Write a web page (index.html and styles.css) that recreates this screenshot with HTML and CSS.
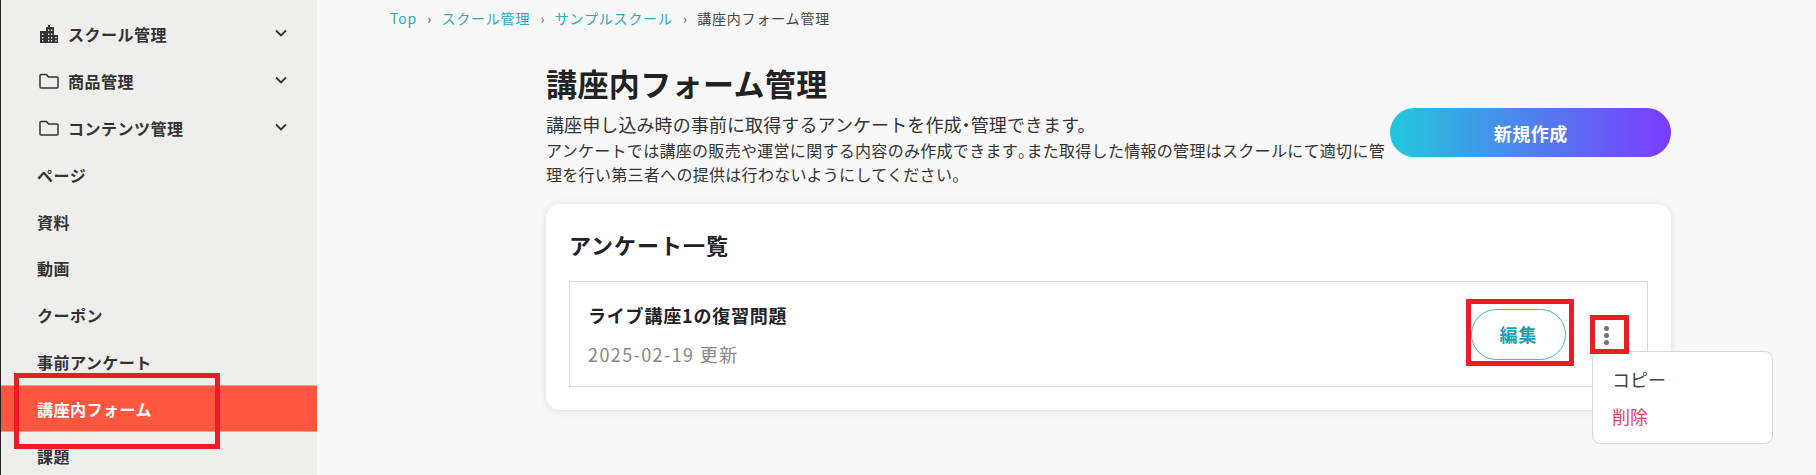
FILE: index.html
```html
<!DOCTYPE html>
<html lang="ja">
<head>
    <meta charset="UTF-8">
    <meta name="viewport" content="width=device-width, initial-scale=1.0">
    <title>講座内フォーム管理</title>
    <link rel="stylesheet" href="styles.css">
</head>
<body>
    <div class="page">
        <nav class="sidebar">
            <div class="nav-item nav-group">
                <svg class="nav-icon" viewBox="0 0 20 20"><path d="M1 7h6V3h2V1h2v2h4v8h4v8H1z" fill="#333"/><path d="M9 5.500h1.300v1.600H9zM12 5.500h1.300v1.600H12zM9 9.500h1.300v1.600H9zM12 9.500h1.300v1.600H12zM3 9.500h1.300v1.600H3zM9 13h1.300v1.600H9zM12 13h1.300v1.600H12zM3 13h1.300v1.600H3zM16.300 13h1.300v1.600h-1.300zM9 16h1.300v1.600H9zM12 16h1.300v1.600H12zM3 16h1.300v1.600H3zM16.300 16h1.300v1.600h-1.300z" fill="#eeeeed"/></svg>
                <span>スクール管理</span>
                <svg class="chevron" viewBox="0 0 12 8"><path d="M1 1.500l5 5 5-5" fill="none" stroke="#333" stroke-width="1.800"/></svg>
            </div>
            <div class="nav-item nav-group">
                <svg class="nav-icon" viewBox="0 0 20 20"><path d="M1 4.500a1 1 0 0 1 1-1h5.500l2 2.500H18a1 1 0 0 1 1 1v9a1 1 0 0 1-1 1H2a1 1 0 0 1-1-1z" fill="none" stroke="#333" stroke-width="1.500"/></svg>
                <span>商品管理</span>
                <svg class="chevron" viewBox="0 0 12 8"><path d="M1 1.500l5 5 5-5" fill="none" stroke="#333" stroke-width="1.800"/></svg>
            </div>
            <div class="nav-item nav-group">
                <svg class="nav-icon" viewBox="0 0 20 20"><path d="M1 4.500a1 1 0 0 1 1-1h5.500l2 2.500H18a1 1 0 0 1 1 1v9a1 1 0 0 1-1 1H2a1 1 0 0 1-1-1z" fill="none" stroke="#333" stroke-width="1.500"/></svg>
                <span>コンテンツ管理</span>
                <svg class="chevron" viewBox="0 0 12 8"><path d="M1 1.500l5 5 5-5" fill="none" stroke="#333" stroke-width="1.800"/></svg>
            </div>
            <div class="nav-item">ページ</div>
            <div class="nav-item">資料</div>
            <div class="nav-item">動画</div>
            <div class="nav-item">クーポン</div>
            <div class="nav-item">事前アンケート</div>
            <div class="nav-item active">講座内フォーム</div>
            <div class="nav-item">課題</div>
        </nav>

        <main class="main">
            <div class="breadcrumb">
                <a>Top</a><span class="sep">›</span><a>スクール管理</a><span class="sep">›</span><a>サンプルスクール</a><span class="sep">›</span><span>講座内フォーム管理</span>
            </div>

            <div class="content">
                <h1>講座内フォーム管理</h1>
                <div class="head-row">
                    <div class="lead">
                        <p class="lead-main">講座申し込み時の事前に取得するアンケートを作成<span class="half">・</span>管理できます。</p>
                        <p class="lead-sub">アンケートでは講座の販売や運営に関する内容のみ作成できます<span class="half">。</span>また取得した情報の管理はスクールにて適切に管理を行い第三者への提供は行わないようにしてください。</p>
                    </div>
                    <button class="new-btn">新規作成</button>
                </div>

                <section class="card">
                    <h2>アンケート一覧</h2>
                    <div class="form-row">
                        <div class="form-info">
                            <div class="form-title">ライブ講座1の復習問題</div>
                            <div class="form-date">2025-02-19 更新</div>
                        </div>
                        <button class="edit-btn">編集</button>
                        <div class="more">
                            <i></i><i></i><i></i>
                        </div>
                        <div class="menu">
                            <div class="menu-item">コピー</div>
                            <div class="menu-item danger">削除</div>
                        </div>
                    </div>
                </section>
            </div>
        </main>
    </div>

    <div class="mark mark-nav"></div>
    <div class="mark mark-edit"></div>
    <div class="mark mark-more"></div>
</body>
</html>
```

FILE: styles.css
```css
* { box-sizing: border-box; }
html, body { height: 100%; }
body { margin: 0; background: #f8f8f8; color: #222; font-family: "Noto Sans CJK JP", "Noto Sans", sans-serif; overflow: hidden; position: relative; }
p, h1, h2 { margin: 0; }
.page { display: flex; height: 475px; }

.sidebar { width: 317px; flex-shrink: 0; background: #eeeeed; border-left: 1px solid #222; padding-top: 11px; overflow: hidden; }
.nav-item { height: 46.8px; display: flex; align-items: center; padding-left: 36px; font-size: 16px; font-weight: 700; letter-spacing: 0.5px; color: #333; }
.nav-group { padding-left: 38px; padding-right: 30px; }
.nav-group span { flex: 1; }
.nav-icon { width: 20px; height: 20px; margin-right: 9px; }
.chevron { width: 12px; height: 8px; margin-top: -2px; }
.nav-item.active { background: #ff5640; color: #fff; border-top: 1px solid #ff9a8c; border-bottom: 1px solid #ff9a8c; }

.main { flex: 1; padding-left: 73px; }
.breadcrumb { height: 36px; display: flex; align-items: center; font-size: 14px; letter-spacing: 0.8px; color: #444; }
.breadcrumb a { color: #27a9c0; }
.sep { width: 24.5px; text-align: center; letter-spacing: 0; color: #555; font-size: 13px; }

.content { width: 1125px; margin-left: 156px; padding-top: 25px; }
h1 { font-size: 31px; line-height: 44px; font-weight: 700; letter-spacing: 0.4px; color: #222; }
.head-row { display: flex; justify-content: space-between; margin-top: 2px; }
.lead { width: 846px; padding-top: 3px; color: #333; }
.lead-main { font-size: 18px; line-height: 28px; letter-spacing: 0.1px; }
.lead-sub { font-size: 16px; line-height: 24px; letter-spacing: 0.3px; }
.half { font-feature-settings: "halt"; }
.new-btn { width: 281px; height: 49px; border: none; border-radius: 25px; margin-top: 1px; background: linear-gradient(90deg, #22c8dc, #7c3aff); color: #fff; font: 700 18px "Noto Sans CJK JP", sans-serif; letter-spacing: 0.5px; }

.card { margin-top: 18px; height: 206px; background: #fff; border-radius: 14px; box-shadow: 0 1px 8px rgba(0, 0, 0, 0.1); padding: 24px 23px; }
h2 { font-size: 22px; line-height: 32px; font-weight: 700; letter-spacing: 1px; color: #222; }
.form-row { position: relative; margin-top: 21px; height: 106px; border: 1px solid #d8d8e0; display: flex; align-items: center; padding-left: 18px; }
.form-info { flex: 1; }
.form-title { font-size: 18px; line-height: 26px; font-weight: 700; letter-spacing: 0.8px; }
.form-date { margin-top: 14px; font-size: 18px; line-height: 24px; color: #888; letter-spacing: 1.4px; }
.edit-btn { width: 95px; height: 51px; border: 1px solid #3db8c8; border-radius: 26px; background: #fff; color: #1a9fb5; font: 700 18px "Noto Sans CJK JP", sans-serif; letter-spacing: 1px; }
.more { width: 12px; margin: 2px 35px 0 34px; display: flex; flex-direction: column; align-items: center; gap: 2px; }
.more i { width: 5px; height: 5px; border-radius: 50%; background: #6b7280; }
.menu { position: absolute; left: 1022px; top: 69px; width: 181px; height: 93px; background: #fff; border: 1px solid #d8d8d8; border-radius: 8px; padding: 9px 19px; }
.menu-item { font-size: 18px; line-height: 36.5px; color: #444; }
.menu-item.danger { color: #e83e6c; }

.mark { position: absolute; border: 5px solid #ee1c25; }
.mark-nav { left: 14px; top: 373px; width: 206px; height: 76px; }
.mark-edit { left: 1466px; top: 299px; width: 108px; height: 67px; }
.mark-more { left: 1590px; top: 315px; width: 39px; height: 39px; }
```
